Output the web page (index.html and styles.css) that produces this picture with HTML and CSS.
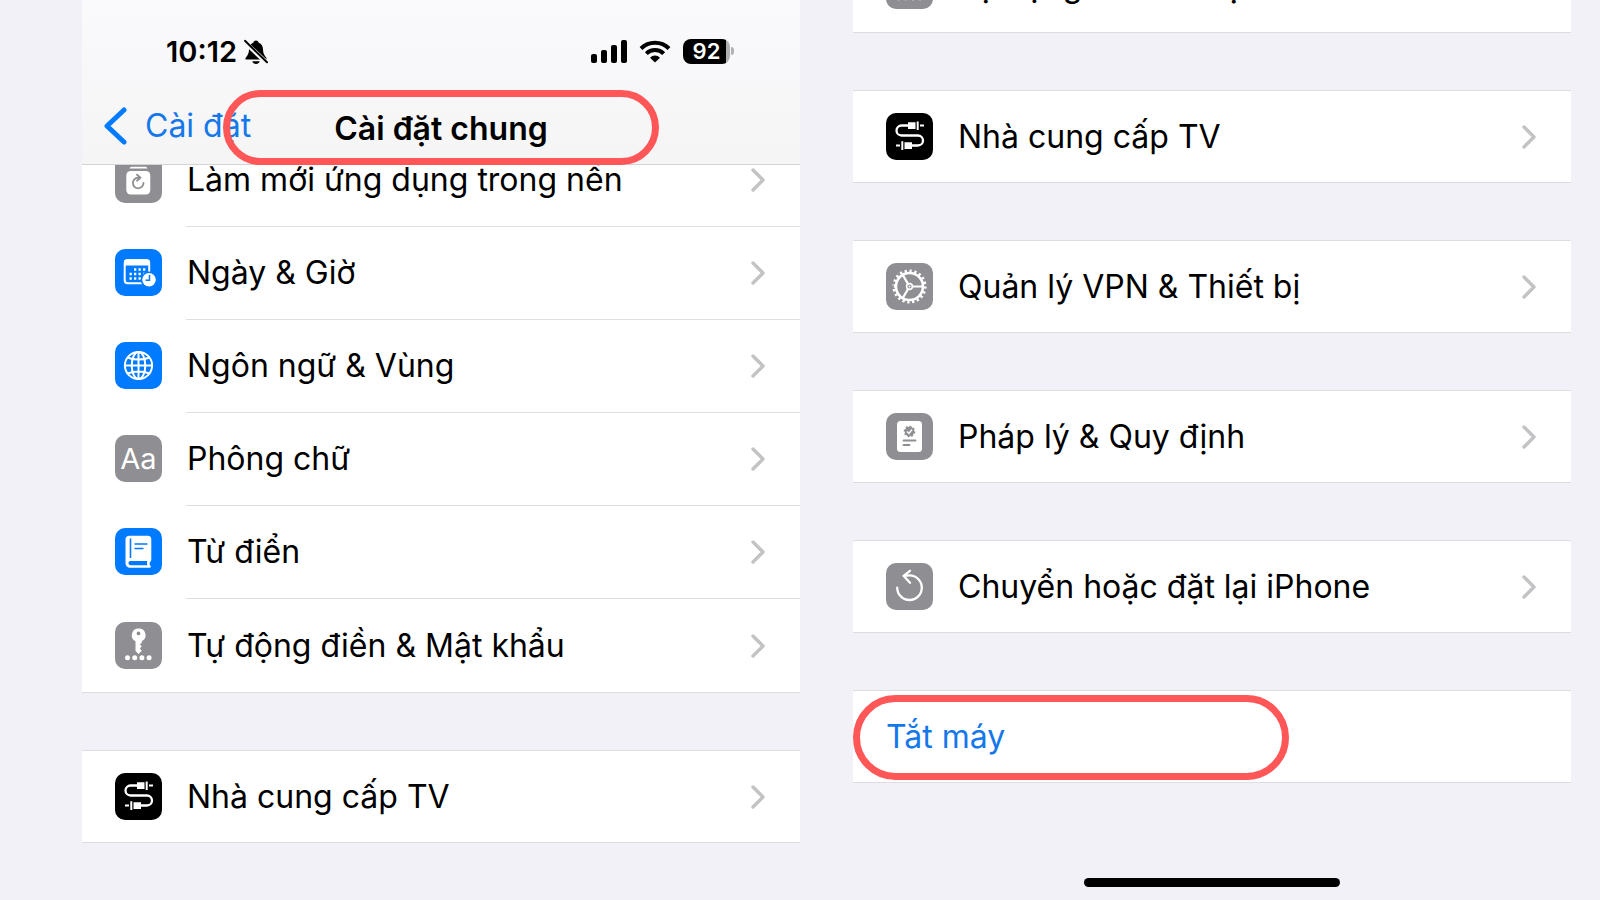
FILE: index.html
```html
<!DOCTYPE html>
<html lang="vi">
<head>
<meta charset="utf-8">
<meta name="viewport" content="width=device-width, initial-scale=1">
<title>Cài đặt chung</title>
<link rel="stylesheet" href="styles.css">
</head>
<body>
<svg class="defs" aria-hidden="true">
  <symbol id="chevron" viewBox="0 0 14 24"><path d="M2 2l10 10L2 22" fill="none" stroke="#c3c3c5" stroke-width="3.4" stroke-linecap="round" stroke-linejoin="round"/></symbol>
  <symbol id="tv" viewBox="0 0 47 47">
    <path d="M23 12.500h-7.500a5 5 0 0 0 0 10h16.500a5 5 0 0 1 0 10H25" fill="none" stroke="#fff" stroke-width="2.300"/>
    <path d="M22 9.300h7.500v6.700H22zM30.700 8.500h2v8.500h-2zM34 11.400h4v2.200h-4zM18.500 29.300H26V36h-7.500zM15.300 28.300h2V37h-2zM10 31.400h4v2.200h-4z" fill="#fff"/>
  </symbol>
  <symbol id="key" viewBox="0 0 47 47">
    <path fill="#fff" fill-rule="evenodd" d="M23.500 6.500a6.700 6.700 0 0 0-3 12.700V29l3 3 3.300-3.200-2-2.300 2-2.300-2-2 2-1.500v-1.500a6.700 6.700 0 0 0-3.300-12.700zm0 3a1.900 1.900 0 1 1 0 3.800 1.900 1.900 0 0 1 0-3.800z"/>
    <g fill="#fff"><circle cx="12.500" cy="35.700" r="2.500"/><circle cx="19.700" cy="35.700" r="2.500"/><circle cx="26.900" cy="35.700" r="2.500"/><circle cx="34.100" cy="35.700" r="2.500"/></g>
  </symbol>
</svg>
<main class="screens">
  <section class="screen">
    <header class="header">
      <div class="status">
        <div class="status-side">
          <span class="time">10:12</span>
          <svg class="bell" viewBox="0 0 24 26" aria-label="Im lặng"><path d="M12 1.500c-1.500 0-2.500 1-2.700 2.200C6.500 4.800 5 7.300 5 10.500c0 4-1.500 6-3.500 8.500v1.500h21V19c-2-2.500-3.500-4.500-3.500-8.500 0-3.200-1.500-5.700-4.300-6.800C14.500 2.500 13.500 1.500 12 1.500zM8.300 22.300h7.400c-.5 1.700-1.900 2.700-3.700 2.700s-3.200-1-3.700-2.700z"/><path d="M0 2.500l23 21.500" stroke="#f7f7f9" stroke-width="4.500"/><path d="M1 1.800l22 21.500" stroke="#000" stroke-width="1.900" stroke-linecap="round"/></svg>
        </div>
        <div class="status-side status-right">
          <svg class="signal" viewBox="0 0 36 23"><rect y="14" width="6" height="9" rx="2"/><rect x="10" y="10" width="6" height="13" rx="2"/><rect x="20" y="5" width="6" height="18" rx="2"/><rect x="30" width="6" height="23" rx="2"/></svg>
          <svg class="wifi" viewBox="0 0 32 23" fill="none" stroke="#000" stroke-width="4"><path d="M2 8.500a20 20 0 0 1 28 0M7.300 13.700a12.300 12.300 0 0 1 17.400 0"/><path d="M16 22.500l-5-4.800a7 7 0 0 1 10 0z" fill="#000" stroke="none"/></svg>
          <div class="battery"><span>92</span></div>
        </div>
      </div>
      <nav class="navbar">
        <a class="back" href="#"><svg viewBox="0 0 24 38"><path d="M21 3L4 19l17 16" fill="none" stroke="#007aff" stroke-width="5" stroke-linecap="round" stroke-linejoin="round"/></svg><span>Cài đặt</span></a>
        <h1 class="title">Cài đặt chung</h1>
        <div class="ring ring-title"></div>
      </nav>
    </header>
    <div class="scroll">
      <div class="group group-many group-first">
        <a class="row" href="#"><svg class="icon gray" viewBox="0 0 47 47"><rect x="11.300" y="15" width="24" height="23.500" rx="4.500" fill="#fff"/><path d="M14.500 12.500c.5-1.500 1.500-1.800 3-1.800h12c1.500 0 2.500.3 3 1.800zM17 8.500c.5-1.300 1-1.500 2-1.500h9c1 0 1.500.2 2 1.500z" fill="#fff"/><path d="M24 21.700h-1a5.300 5.300 0 1 0 5.500 5.300M22 18.700l3.500 3-3.500 3" fill="none" stroke="#8e8e93" stroke-width="1.800" stroke-linecap="round" stroke-linejoin="round"/></svg><span class="label">Làm mới ứng dụng trong nền</span><svg class="chev"><use href="#chevron"/></svg></a>
        <a class="row" href="#"><svg class="icon blue" viewBox="0 0 47 47"><rect x="9.700" y="11.200" width="24.500" height="23" rx="3" fill="none" stroke="#fff" stroke-width="2"/><path d="M9 16.500V13a2.800 2.800 0 0 1 2.800-2.800H32a2.800 2.800 0 0 1 2.800 2.800v3.500z" fill="#fff"/><path d="M19 20.500h13M14.500 25h17M14.500 29.500h13" stroke="#fff" stroke-width="2.300" stroke-dasharray="2.300 2.200"/><circle cx="34" cy="30.700" r="8.300" fill="#007aff"/><circle cx="34" cy="30.700" r="6.800" fill="#fff"/><path d="M34.500 26v5.200h-4" fill="none" stroke="#007aff" stroke-width="1.500"/></svg><span class="label">Ngày &amp; Giờ</span><svg class="chev"><use href="#chevron"/></svg></a>
        <a class="row" href="#"><svg class="icon blue" viewBox="0 0 47 47" fill="none" stroke="#fff" stroke-width="2"><circle cx="23.500" cy="23.500" r="13.600"/><ellipse cx="23.500" cy="23.500" rx="6.800" ry="13.600"/><path d="M23.500 10v27M10 23.500h27M12.700 15.500c6 2.800 15.600 2.800 21.600 0M12.700 31.500c6-2.800 15.600-2.800 21.600 0"/></svg><span class="label">Ngôn ngữ &amp; Vùng</span><svg class="chev"><use href="#chevron"/></svg></a>
        <a class="row" href="#"><span class="icon gray icon-text">Aa</span><span class="label">Phông chữ</span><svg class="chev"><use href="#chevron"/></svg></a>
        <a class="row" href="#"><svg class="icon blue" viewBox="0 0 47 47"><path d="M14.500 7.700h18.300a3.500 3.500 0 0 1 3.500 3.500v20.300a3 3 0 0 1-1.300 2.500c-.6 1.200-.5 2.700.5 3.800.8.900.3 1.900-.7 1.900H15a4.500 4.500 0 0 1-4.500-4.500V11.700a4 4 0 0 1 4-4z" fill="#fff"/><path d="M15.500 33h16.800c-.5 1.400-.5 2.800 0 4.200H15.500a2.100 2.100 0 0 1 0-4.200z" fill="#007aff"/><path d="M15.500 10.500V30M19.500 16h13M19.500 20.500h9" stroke="#007aff" stroke-width="1.600"/></svg><span class="label">Từ điển</span><svg class="chev"><use href="#chevron"/></svg></a>
        <a class="row" href="#"><svg class="icon gray"><use href="#key"/></svg><span class="label">Tự động điền &amp; Mật khẩu</span><svg class="chev"><use href="#chevron"/></svg></a>
      </div>
      <div class="group">
        <a class="row" href="#"><svg class="icon black"><use href="#tv"/></svg><span class="label">Nhà cung cấp TV</span><svg class="chev"><use href="#chevron"/></svg></a>
      </div>
    </div>
  </section>

  <section class="screen">
    <div class="scroll">
      <div class="group group-many group-tail">
        <a class="row" href="#"><svg class="icon gray"><use href="#key"/></svg><span class="label">Tự động điền &amp; Mật khẩu</span><svg class="chev"><use href="#chevron"/></svg></a>
      </div>
      <div class="group">
        <a class="row" href="#"><svg class="icon black"><use href="#tv"/></svg><span class="label">Nhà cung cấp TV</span><svg class="chev"><use href="#chevron"/></svg></a>
      </div>
      <div class="group">
        <a class="row" href="#"><svg class="icon gray" viewBox="0 0 47 47" fill="none" stroke="#fff"><circle cx="23.500" cy="23.500" r="13.500" stroke-width="2.600"/><circle cx="23.500" cy="23.500" r="15.700" stroke-width="2.800" pathLength="100" stroke-dasharray="2.300 2.700"/><circle cx="23.500" cy="23.500" r="2.900" stroke-width="1.600"/><circle cx="23.500" cy="23.500" r="1" fill="#fff" stroke="none"/><path d="M26.500 23.500H37M22 20.900l-5.400-9.300M22 26.100l-5.400 9.300" stroke-width="2.200"/></svg><span class="label">Quản lý VPN &amp; Thiết bị</span><svg class="chev"><use href="#chevron"/></svg></a>
      </div>
      <div class="group">
        <a class="row" href="#"><svg class="icon gray" viewBox="0 0 47 47"><rect x="11" y="8" width="25" height="31" rx="3.500" fill="#fff"/><circle cx="23.500" cy="18.500" r="4.800" fill="#8e8e93"/><circle cx="23.500" cy="18.500" r="5" fill="none" stroke="#8e8e93" stroke-width="1.600" pathLength="80" stroke-dasharray="5 5"/><path d="M21 18.500l2 2 3-4" fill="none" stroke="#fff" stroke-width="1.400"/><path d="M17.500 27.500h12M17.500 32h6" stroke="#8e8e93" stroke-width="1.800" stroke-linecap="round"/></svg><span class="label">Pháp lý &amp; Quy định</span><svg class="chev"><use href="#chevron"/></svg></a>
      </div>
      <div class="group">
        <a class="row" href="#"><svg class="icon gray" viewBox="0 0 47 47" fill="none" stroke="#fff" stroke-width="2.300" stroke-linecap="round" stroke-linejoin="round"><path d="M11.200 24.700a12.300 12.300 0 1 0 12.300-12.300c-2 0-4 0-5.500.4M24 7.800l-6.500 5 6.500 7"/></svg><span class="label">Chuyển hoặc đặt lại iPhone</span><svg class="chev"><use href="#chevron"/></svg></a>
      </div>
      <div class="group">
        <button class="row power" type="button">Tắt máy</button>
        <div class="ring ring-power"></div>
      </div>
    </div>
    <div class="home"></div>
  </section>
</main>
</body>
</html>
```
FILE: styles.css
```css
* { box-sizing: border-box; }

body {
  margin: 0;
  background: #f2f1f8;
  color: #000;
  font-family: Inter, "Noto Sans", sans-serif;
  font-size: 32px;
  line-height: 40px;
}

a { color: inherit; text-decoration: none; }
svg { display: block; flex: none; }
.defs { position: absolute; width: 0; height: 0; }

.screens {
  display: grid;
  grid-template-columns: minmax(0, 1fr) minmax(0, 1fr);
  gap: 53px;
  height: 100vh;
  padding: 0 29px 0 82px;
  overflow: hidden;
}

.screen {
  position: relative;
  display: flex;
  flex-direction: column;
  min-height: 0;
}

.header {
  position: relative;
  z-index: 1;
  background: linear-gradient(#fafafc, #f5f5f6);
  border-bottom: 1px solid #d4d4d8;
}

.status {
  display: flex;
  justify-content: space-between;
  align-items: center;
  height: 103px;
  padding: 0 70px 0 84px;
}
.status-side { display: flex; align-items: center; gap: 7px; }
.status-right { gap: 12px; }
.time { font-size: 29px; font-weight: 600; }
.bell { width: 24px; height: 26px; }
.signal { width: 36px; height: 23px; }
.wifi { width: 32px; height: 23px; }

.battery {
  display: flex;
  align-items: center;
  justify-content: center;
  position: relative;
  width: 47px;
  height: 25px;
  border-radius: 8px;
  background: linear-gradient(90deg, #000 92%, #b0b0b3 92%);
  color: #fff;
  font-size: 22px;
  font-weight: 600;
  line-height: 25px;
}
.battery::after {
  content: "";
  position: absolute;
  left: 100%;
  top: 8px;
  width: 3px;
  height: 8px;
  margin-left: 1px;
  border-radius: 0 4px 4px 0;
  background: #b0b0b3;
}

.navbar {
  position: relative;
  display: grid;
  grid-template-columns: 1fr auto 1fr;
  align-items: start;
  height: 61px;
  padding: 3px 21px 0;
}
.back { display: flex; align-items: center; gap: 18px; color: #1478eb; }
.back svg { width: 24px; height: 38px; }
.title { margin: 3px 0 0; font-size: 32px; font-weight: 600; }

.ring {
  position: absolute;
  width: 436px;
  border: 7px solid #ff5757;
  border-radius: 43px;
  pointer-events: none;
}
.ring-title { top: -13px; left: 50%; height: 75px; margin-left: -218px; }
.ring-power { top: 4px; left: 0; height: 85px; }

.scroll { flex: 1; min-height: 0; overflow: hidden; }

.group {
  position: relative;
  margin-bottom: 57px;
  border: solid #dcdce1;
  border-width: 1px 0;
  background: #fff;
}
.group-many { border-top: 0; }
.group-first { margin-top: -31px; }
.group-tail { margin-top: -61px; }

.row {
  position: relative;
  display: flex;
  align-items: center;
  gap: 25px;
  width: 100%;
  min-height: 91px;
  padding: 0 35px 0 33px;
}
.group-many .row { min-height: 93px; }
.group-many .row:not(:last-child) { padding-bottom: 2px; }
.row:not(:last-child)::after {
  content: "";
  position: absolute;
  right: 0;
  bottom: 0;
  left: 104px;
  height: 1px;
  background: #dfdfe2;
}

.label { flex: 1; white-space: nowrap; }
.chev { width: 14px; height: 24px; }

.icon { flex: none; width: 47px; height: 47px; border-radius: 10px; }
.blue { background: #007aff; }
.gray { background: #8e8e93; }
.black { background: #000; }
.icon-text {
  color: #fff;
  font-size: 29px;
  font-weight: 400;
  line-height: 47px;
  text-align: center;
}

.power {
  border: 0;
  background: none;
  color: #1478eb;
  font: inherit;
  text-align: left;
}
.group .power::after { content: none; }

.home {
  position: absolute;
  bottom: 13px;
  left: 50%;
  width: 256px;
  height: 9px;
  margin-left: -128px;
  border-radius: 5px;
  background: #000;
}
```
